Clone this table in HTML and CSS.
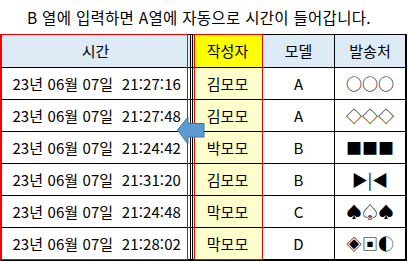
FILE: index.html
```html
<!DOCTYPE html>
<html lang="ko">
<head>
<meta charset="utf-8">
<link rel="stylesheet" href="styles.css">
</head>
<body>
<div class="page">
  <div class="title">B 열에 입력하면 A열에 자동으로 시간이 들어갑니다.</div>
  <div class="sheet">
    <div class="row head">
      <div class="c time">시간</div>
      <div class="c author">작성자</div>
      <div class="c model">모델</div>
      <div class="c dest">발송처</div>
    </div>
    <div class="row">
      <div class="c time">23년 06월 07일  21:27:16</div>
      <div class="c author">김모모</div>
      <div class="c model">A</div>
      <div class="c dest sym">○○○</div>
    </div>
    <div class="row">
      <div class="c time">23년 06월 07일  21:27:48</div>
      <div class="c author">김모모</div>
      <div class="c model">A</div>
      <div class="c dest sym">◇◇◇</div>
    </div>
    <div class="row">
      <div class="c time">23년 06월 07일  21:24:42</div>
      <div class="c author">박모모</div>
      <div class="c model">B</div>
      <div class="c dest sym">■■■</div>
    </div>
    <div class="row">
      <div class="c time">23년 06월 07일  21:31:20</div>
      <div class="c author">김모모</div>
      <div class="c model">B</div>
      <div class="c dest sym">▶|◀</div>
    </div>
    <div class="row">
      <div class="c time">23년 06월 07일  21:24:48</div>
      <div class="c author">막모모</div>
      <div class="c model">C</div>
      <div class="c dest sym">♠♤♠</div>
    </div>
    <div class="row last">
      <div class="c time">23년 06월 07일  21:28:02</div>
      <div class="c author">막모모</div>
      <div class="c model">D</div>
      <div class="c dest sym">◈▣◐</div>
    </div>
    <div class="hl hl-a"></div>
    <div class="hl hl-b"></div>
    <svg class="arrow" width="28" height="29" viewBox="0 0 28 29">
      <polygon points="0.5,14 11,1 11,7.5 27,7.5 27,21 11,21 11,28" fill="#5b9bd5" stroke="#41719c" stroke-width="1"/>
    </svg>
  </div>
</div>
</body>
</html>
```
FILE: styles.css
```css
html, body {
  margin: 0;
  padding: 0;
  background: #ffffff;
}
body {
  font-family: "Noto Sans CJK KR", "Noto Sans", sans-serif;
  color: #000;
}
.page {
  width: 408px;
  height: 261px;
  overflow: hidden;
}
.title {
  height: 34px;
  line-height: 34px;
  padding-left: 27px;
  font-size: 15.5px;
  letter-spacing: 0.3px;
  white-space: pre;
}
.sheet {
  position: relative;
  width: 404px;
  border-top: 1px solid #000;
  border-left: 1px solid #000;
  border-right: 2px solid #000;
  border-bottom: 2px solid #000;
}
.row {
  display: grid;
  grid-template-columns: 192px 70px 72px 70px;
  box-sizing: border-box;
  height: 32px;
  border-bottom: 1px solid #000;
}
.row.head {
  height: 33px;
  background: #ddebf7;
}
.row.last {
  height: 31px;
  border-bottom: none;
}
.c {
  font-size: 15px;
  line-height: 31px;
  text-align: center;
  white-space: pre;
  border-right: 1px solid #000;
}
.head .c {
  line-height: 32px;
}
.time {
  border-right: 3px double #000;
}
.row:not(.head) .time {
  text-align: right;
  padding-right: 9px;
  letter-spacing: 0.1px;
}
.author {
  background: #ffffcc;
}
.head .author {
  background: #ffff00;
}
.dest {
  border-right: none;
}
.sym {
  font-size: 16px;
}
.hl {
  position: absolute;
  border: 1px solid #ff0000;
  pointer-events: none;
}
.hl-a {
  left: -1px;
  top: -1px;
  width: 185px;
  height: 224px;
  border-left-width: 2px;
}
.hl-b {
  left: 193px;
  top: -1px;
  width: 67px;
  height: 224px;
}
.arrow {
  position: absolute;
  left: 176px;
  top: 81px;
}
```
